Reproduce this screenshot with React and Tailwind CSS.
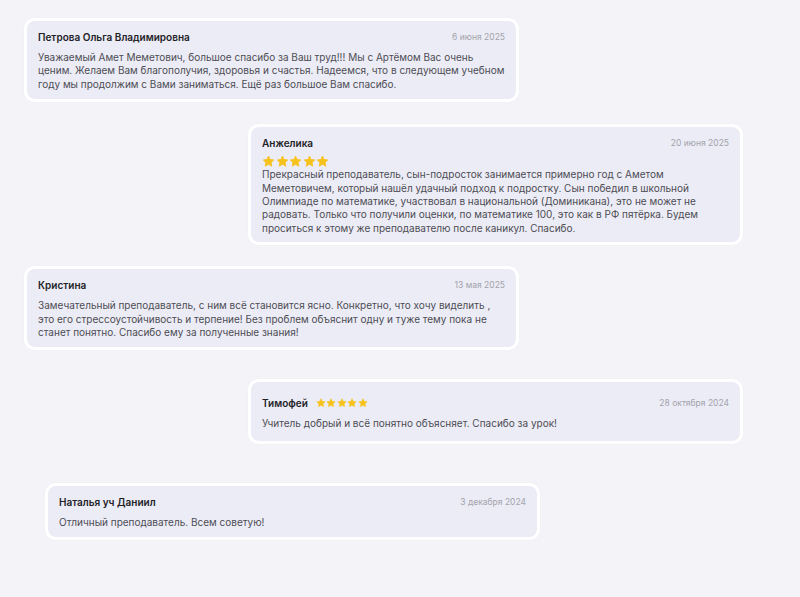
const reviews = [
  {
    name: "Петрова Ольга Владимировна",
    date: "6 июня 2025",
    text: "Уважаемый Амет Меметович, большое спасибо за Ваш труд!!! Мы с Артёмом Вас очень ценим. Желаем Вам благополучия, здоровья и счастья. Надеемся, что в следующем учебном году мы продолжим с Вами заниматься. Ещё раз большое Вам спасибо.",
    wrap: "ml-[24px]",
  },
  {
    name: "Анжелика",
    date: "20 июня 2025",
    stars: "below",
    text: "Прекрасный преподаватель, сын-подросток занимается примерно год с Аметом Меметовичем, который нашёл удачный подход к подростку. Сын победил в школьной Олимпиаде по математике, участвовал в национальной (Доминикана), это не может не радовать. Только что получили оценки, по математике 100, это как в РФ пятёрка. Будем проситься к этому же преподавателю после каникул. Спасибо.",
    wrap: "ml-[248px] mt-[22px]",
  },
  {
    name: "Кристина",
    date: "13 мая 2025",
    text: "Замечательный преподаватель, с ним всё становится ясно. Конкретно, что хочу виделить , это его стрессоустойчивость и терпение! Без проблем объяснит одну и туже тему пока не станет понятно. Спасибо ему за полученные знания!",
    wrap: "ml-[24px] mt-[21px]",
  },
  {
    name: "Тимофей",
    date: "28 октября 2024",
    stars: "inline",
    text: "Учитель добрый и всё понятно объясняет. Спасибо за урок!",
    wrap: "ml-[248px] mt-[29px]",
  },
  {
    name: "Наталья уч Даниил",
    date: "3 декабря 2024",
    text: "Отличный преподаватель. Всем советую!",
    wrap: "ml-[45px] mt-[39px]",
  },
];

function Star({ size }) {
  return (
    <svg width={size} height={size} viewBox="0 0 24 24">
      <path
        d="M12 2l3 6.2 6.8.9-5 4.7 1.3 6.8L12 17.3l-6.1 3.3 1.3-6.8-5-4.7 6.8-.9z"
        fill="#f6c21c"
        stroke="#f6c21c"
        strokeWidth="1.5"
        strokeLinejoin="round"
      />
    </svg>
  );
}

function Stars({ size, gap }) {
  return (
    <div className={`flex items-center ${gap}`}>
      {[0, 1, 2, 3, 4].map((i) => (
        <Star key={i} size={size} />
      ))}
    </div>
  );
}

export default function App() {
  return (
    <div
      className="flex min-h-[597px] w-[800px] flex-col items-start bg-[#f4f4f8] pb-8 pt-[18px] text-[#2a2a2e]"
      style={{ fontFamily: "Inter, 'Noto Sans', sans-serif" }}
    >
      {reviews.map((r) => (
        <div key={r.name} className={`${r.wrap} w-[495px] rounded-[10px] bg-white p-[3px] shadow-[0_0_2px_rgba(0,0,0,0.04)]`}>
          <div
            className={`rounded-[8px] bg-[#ececf6] px-[11px] ${
              r.stars === "inline" ? "pb-[10px] pt-[14px]" : r.stars === "below" ? "pb-[7px] pt-[9px]" : "pb-[8px] pt-[9px]"
            }`}
          >
            <div className="flex items-center justify-between">
              <div className="flex items-center gap-[8px]">
                <span className="text-[10px] font-semibold leading-[14px] text-[#232327]">{r.name}</span>
                {r.stars === "inline" && <Stars size={10} gap="gap-[0.5px]" />}
              </div>
              <span className="text-[8.5px] leading-[14px] text-[#a3a3ab]">{r.date}</span>
            </div>
            {r.stars === "below" && (
              <div className="mt-[5px]">
                <Stars size={13} gap="gap-[0.5px]" />
              </div>
            )}
            <p
              className={`-mr-[1px] text-[10px] leading-[13.4px] text-[#4c4c54] ${
                r.stars === "below" ? "mt-0" : "mt-[7px]"
              }`}
            >
              {r.text}
            </p>
          </div>
        </div>
      ))}
    </div>
  );
}
